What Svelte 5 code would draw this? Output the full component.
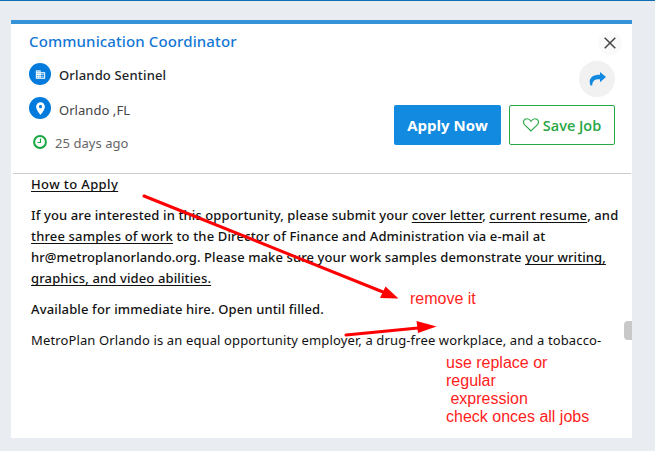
<script>
  const building = 'M12 7V3H2v18h20V7H12zM6 19H4v-2h2v2zm0-4H4v-2h2v2zm0-4H4V9h2v2zm0-4H4V5h2v2zm4 12H8v-2h2v2zm0-4H8v-2h2v2zm0-4H8V9h2v2zm0-4H8V5h2v2zm10 12h-8v-2h2v-2h-2v-2h2v-2h-2V9h8v10zm-2-8h-2v2h2v-2zm0 4h-2v2h2v-2z';
  const pin = 'M12 2C8.13 2 5 5.13 5 9c0 5.25 7 13 7 13s7-7.75 7-13c0-3.87-3.13-7-7-7zm0 9.5c-1.38 0-2.5-1.12-2.5-2.5s1.12-2.5 2.5-2.5 2.5 1.12 2.5 2.5-1.12 2.5-2.5 2.5z';
</script>

<div class="page">
  <article class="card">
    <header>
      <div class="info">
        <h1>Communication Coordinator</h1>
        <div class="row company">
          <span class="disc"><svg width="11" height="11" viewBox="0 0 24 24"><path fill="#fff" stroke="#fff" stroke-width=".4" d={building} /></svg></span>
          <span>Orlando Sentinel</span>
        </div>
        <div class="row place">
          <span class="disc"><svg width="15" height="15" viewBox="0 0 24 24"><path fill="#fff" d={pin} /></svg></span>
          <span>Orlando ,FL</span>
        </div>
        <div class="row age">
          <svg width="14" height="14" viewBox="0 0 14 14" fill="none" stroke="#16a83f"><circle cx="7" cy="7" r="5.9" stroke-width="2" /><path d="M7.5 3.5v4H4.5" stroke-width="1.2" /></svg>
          <span>25 days ago</span>
        </div>
      </div>
      <div class="actions">
        <button class="close" aria-label="Close"><svg width="12" height="12" viewBox="0 0 12 12"><path d="M.7.7l10.6 10.6M11.3.7L.7 11.3" stroke="#444" stroke-width="1.5" /></svg></button>
        <button class="share" aria-label="Share"><svg width="17" height="14" viewBox="0 0 17 14"><path fill="#128ae0" d="M11 0l6 5-6 5.2V7.4C6.5 7 3.5 8.3 3.2 13.5H1.5C-1 7 2.5 2.7 11 2.7z" /></svg></button>
        <div class="buttons">
          <button class="apply">Apply Now</button>
          <button class="save"><svg width="16" height="14" viewBox="0 0 16 14"><path d="M8 13L2 7.2C-1 4 1 .7 4 .7c2 0 3.2 1.2 4 2.5C8.8 1.9 10 .7 12 .7c3 0 5 3.3 2 6.5z" fill="none" stroke="#28a745" stroke-width="1.1" /></svg><span>Save Job</span></button>
        </div>
      </div>
    </header>
    <section>
      <p class="how"><u>How to Apply</u></p>
      <p><span class="l1">If you are interested in this opportunity, please submit your <u>cover letter</u>, <u>current resume</u>, and</span><br /><span class="l2"><u>three samples of work</u> to the Director of Finance and Administration via e-mail at</span><br /><span class="l3">hr@metroplanorlando.org. Please make sure your work samples demonstrate <u>your writing,</u></span><br /><span class="l4"><u>graphics, and video abilities.</u></span></p>
      <p class="l5">Available for immediate hire. Open until filled.</p>
      <p class="l6">MetroPlan Orlando is an equal opportunity employer, a drug-free workplace, and a tobacco-</p>
    </section>
  </article>
  <i class="thumb"></i>
  <svg class="marks" width="655" height="451" viewBox="0 0 655 451">
    <g stroke="#f00" stroke-width="3" stroke-linecap="round"><path d="M144 196L383 292M346 335L418 328" /></g>
    <path d="M398.5 298.5L385.5 286.5L380 298zM436.5 326.5L416.5 321L418 333z" fill="#f00" />
  </svg>
  <div class="note first">remove it</div>
  <div class="note second">use replace or<br />regular<br />{' '}expression<br />check onces all jobs</div>
</div>

<style>
  :global(body) { margin: 0; }
  .page { position: relative; box-sizing: border-box; width: 655px; height: 451px; overflow: hidden; padding: 19px 23px 13px 11px; border-top: 1px solid #0f6fb3; background: #e9edf2; font-family: "Noto Sans", "Open Sans", sans-serif; color: #111; }
  .card { box-sizing: border-box; height: 418px; border-top: 4px solid #3793d8; background: #fff; }
  header { box-sizing: border-box; display: flex; justify-content: space-between; height: 150px; margin: 0 1px 0 2px; border-bottom: 1px solid #ccc; }
  .info { padding: 5px 0 0 16px; white-space: nowrap; }
  h1 { margin: 0 0 10px; font-size: 15px; line-height: 24px; font-weight: 500; letter-spacing: .12px; color: #1377d5; }
  .row { display: flex; align-items: center; }
  .row span:last-child { font-size: 13px; line-height: 20px; letter-spacing: .05px; }
  .disc { display: flex; align-items: center; justify-content: center; width: 22px; height: 22px; margin-right: 8px; border-radius: 50%; background: #027bdc; }
  .company { font-weight: 500; color: #212529; }
  .row.company span:last-child { padding-top: 2px; letter-spacing: .17px; }
  .place { margin-top: 11px; color: #444; }
  .place span:last-child { padding-top: 4px; }
  .age { margin: 11px 0 0 4px; color: #666; }
  .age span:last-child { margin-left: 8px; padding-top: 2px; }
  .actions { display: flex; flex-direction: column; align-items: flex-end; padding: 7px 16px 0 0; }
  button { display: flex; align-items: center; justify-content: center; box-sizing: border-box; margin: 0; padding: 0; border: 0; font: inherit; }
  .close { width: 24px; height: 24px; margin-right: -7px; border-radius: 50%; background: #fafafa; }
  .share { width: 36px; height: 36px; margin-top: 6px; border-radius: 50%; background: #f1f1f1; }
  .buttons { display: flex; gap: 8px; margin-top: 8px; }
  .apply, .save { height: 40px; border-radius: 2px; white-space: nowrap; font-family: "Open Sans", sans-serif; }
  .apply { width: 107px; background: #128ae0; color: #fff; font-size: 15px; font-weight: 700; }
  .save { width: 106px; gap: 4px; border: 1px solid #28a745; background: #fff; color: #28a745; font-size: 14.5px; font-weight: 600; }
  section { padding: 0 0 0 20px; font-size: 13px; line-height: 21px; font-weight: 500; white-space: nowrap; }
  p { margin: 0 0 10px; }
  u { text-underline-offset: 2px; text-decoration-thickness: 1px; text-decoration-skip-ink: none; }
  .how { letter-spacing: .38px; }
  .l1 { letter-spacing: .115px; }
  .l2 { letter-spacing: .155px; }
  .l3 { letter-spacing: .09px; }
  .l4 { letter-spacing: .13px; }
  .l5 { letter-spacing: .145px; }
  .l6 { font-weight: 400; letter-spacing: .13px; }
  .thumb { position: absolute; left: 624px; top: 320px; width: 8px; height: 19px; border-radius: 4px 0 0 4px; background: #c8c8c8; }
  .marks { position: absolute; left: 0; top: -1px; }
  .note { position: absolute; font: 16px/18px "Liberation Sans", Arial, sans-serif; color: #ff1c1c; white-space: pre; }
  .first { left: 410px; top: 289px; }
  .second { left: 446px; top: 353px; }
</style>
